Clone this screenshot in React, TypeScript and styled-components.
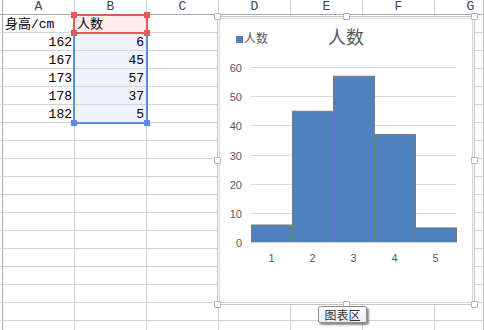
import styled, { createGlobalStyle } from "styled-components";

const GlobalStyle = createGlobalStyle`
  html, body {
    margin: 0;
    padding: 0;
    background: #ffffff;
  }
  body {
    font-family: "Liberation Mono", "Noto Sans CJK SC", monospace;
  }
`;

const columns = ["A", "B", "C", "D", "E", "F", "G"];
const heights = [
  { h: 162, n: 6 },
  { h: 167, n: 45 },
  { h: 173, n: 57 },
  { h: 178, n: 37 },
  { h: 182, n: 5 },
];
const ROWS = 18;

// chart geometry (svg coords)
const PLOT_LEFT = 33;
const PLOT_RIGHT = 238;
const BASE_Y = 186;
const UNIT = 175 / 60;
const BAR_W = (PLOT_RIGHT - PLOT_LEFT) / 5;

function App() {
  const cells: JSX.Element[] = [];
  cells.push(<Corner key="corner" />);
  columns.forEach((c) => cells.push(<ColHead key={"h" + c}>{c}</ColHead>));
  for (let r = 0; r < ROWS; r++) {
    cells.push(<Stub key={"s" + r} />);
    columns.forEach((c, ci) => {
      let text: string | number = "";
      let align: "left" | "right" = "right";
      let fill: "none" | "red" | "blue" = "none";
      if (r === 0 && ci === 0) {
        text = "身高/cm";
        align = "left";
      }
      if (r === 0 && ci === 1) {
        text = "人数";
        align = "left";
        fill = "red";
      }
      if (r >= 1 && r <= 5) {
        if (ci === 0) text = heights[r - 1].h;
        if (ci === 1) {
          text = heights[r - 1].n;
          fill = "blue";
        }
      }
      cells.push(
        <Cell key={r + c} $align={align} $fill={fill}>
          {text}
        </Cell>
      );
    });
  }

  return (
    <>
      <GlobalStyle />
      <Sheet>
        <Grid>{cells}</Grid>

        <BlueSel>
          <Corners>
            <CornerRow />
            <CornerRow>
              <Handle $c="#5b8de6" />
              <Handle $c="#5b8de6" />
            </CornerRow>
          </Corners>
        </BlueSel>
        <RedSel>
          <Corners>
            <CornerRow>
              <Handle $c="#e05c5c" />
              <Handle $c="#e05c5c" />
            </CornerRow>
            <CornerRow>
              <Handle $c="#e05c5c" />
              <Handle $c="#e05c5c" />
            </CornerRow>
          </Corners>
        </RedSel>

        <Chart>
          <FrameHandles>
            <FrameHandle />
            <FrameHandle />
            <FrameHandle />
            <FrameHandle />
            <span />
            <FrameHandle />
            <FrameHandle />
            <FrameHandle />
            <FrameHandle />
          </FrameHandles>
          <ChartHeader>
            <Legend>
              <Swatch />
              人数
            </Legend>
            <Title>人数</Title>
            <span />
          </ChartHeader>
          <svg width="256" height="230" viewBox="0 0 256 230">
            {[0, 10, 20, 30, 40, 50, 60].map((v) => {
              const y = Math.round(BASE_Y - v * UNIT) + 0.5;
              return (
                <g key={v}>
                  {v > 0 && (
                    <line x1={PLOT_LEFT} x2={PLOT_RIGHT} y1={y} y2={y} stroke="#d9d9d9" strokeWidth="1" />
                  )}
                  <text
                    x="24"
                    y={y + 4}
                    textAnchor="end"
                    fontSize="11"
                    fill="#595959"
                    fontFamily="'Liberation Sans', sans-serif"
                  >
                    {v}
                  </text>
                </g>
              );
            })}
            {heights.map((d, i) => {
              const x = PLOT_LEFT + i * BAR_W;
              const hgt = d.n * UNIT;
              return (
                <rect
                  key={i}
                  x={x + 0.5}
                  y={BASE_Y - hgt + 0.5}
                  width={BAR_W}
                  height={hgt}
                  fill="#4f81bd"
                  stroke="#7a7a7a"
                  strokeWidth="1"
                />
              );
            })}
            <line x1={PLOT_LEFT} x2={PLOT_RIGHT + 1} y1={BASE_Y + 0.5} y2={BASE_Y + 0.5} stroke="#d0d0d0" />
            {heights.map((_, i) => (
              <text
                key={"x" + i}
                x={PLOT_LEFT + i * BAR_W + BAR_W / 2}
                y={206}
                textAnchor="middle"
                fontSize="11"
                fill="#595959"
                fontFamily="'Liberation Sans', sans-serif"
              >
                {i + 1}
              </text>
            ))}
          </svg>
        </Chart>

        <Tip>图表区</Tip>
      </Sheet>
    </>
  );
}

const Sheet = styled.div`
  position: relative;
  width: 483px;
  height: 330px;
  overflow: hidden;
  border-right: 1px solid #c6c6c6;
`;

const Grid = styled.div`
  display: grid;
  grid-template-columns: 3px repeat(7, 72px);
  grid-template-rows: 15px repeat(${ROWS}, 18px);
  font-size: 13px;
  color: #000;
`;

const Corner = styled.div`
  border-right: 1px solid #a9a9a9;
  border-bottom: 1px solid #a9a9a9;
`;

const ColHead = styled.div`
  box-sizing: border-box;
  border-right: 1px solid #d4d4d4;
  border-bottom: 1px solid #a9a9a9;
  text-align: center;
  line-height: 14px;
  font-size: 13px;
  color: #444;
`;

const Stub = styled.div`
  box-sizing: border-box;
  border-right: 1px solid #a9a9a9;
  border-bottom: 1px solid #d4d4d4;
`;

const fills = {
  none: "transparent",
  red: "#fdeded",
  blue: "#edf2fc",
};

const Cell = styled.div<{ $align: "left" | "right"; $fill: "none" | "red" | "blue" }>`
  box-sizing: border-box;
  border-right: 1px solid #d4d4d4;
  border-bottom: 1px solid #d4d4d4;
  background: ${(p) => fills[p.$fill]};
  text-align: ${(p) => p.$align};
  padding: ${(p) => (p.$align === "left" ? "0 0 0 2px" : "0 2px 0 0")};
  line-height: 19px;
  white-space: nowrap;
  overflow: hidden;
`;

const Selection = styled.div`
  position: absolute;
  box-sizing: border-box;
  border: 2px solid;
`;

const RedSel = styled(Selection)`
  left: 73px;
  top: 14px;
  width: 75px;
  height: 20px;
  border-color: #e05c5c;
`;

const BlueSel = styled(Selection)`
  left: 73px;
  top: 32px;
  width: 75px;
  height: 92px;
  border-color: #5b8de6;
`;

const Corners = styled.div`
  position: absolute;
  inset: -4px;
  display: flex;
  flex-direction: column;
  justify-content: space-between;
`;

const CornerRow = styled.div`
  display: flex;
  justify-content: space-between;
  height: 6px;
`;

const Handle = styled.span<{ $c: string }>`
  width: 6px;
  height: 6px;
  background: ${(p) => p.$c};
`;

const Chart = styled.div`
  position: absolute;
  left: 217px;
  top: 16px;
  width: 258px;
  height: 289px;
  box-sizing: border-box;
  background: #fff;
  border: 1px solid #c4c4c4;
  box-shadow: inset 0 0 0 1px #fff, inset 0 0 0 2px #d4d4d4;
  font-family: "Liberation Sans", "Noto Sans CJK SC", sans-serif;
`;

const FrameHandles = styled.div`
  position: absolute;
  inset: -4px;
  display: grid;
  grid-template-columns: 7px 1fr 7px;
  grid-template-rows: 7px 1fr 7px;
  justify-items: center;
  align-items: center;
  pointer-events: none;
`;

const FrameHandle = styled.span`
  width: 5px;
  height: 5px;
  background: #fff;
  border: 1px solid #b5b5b5;
  border-radius: 1px;
`;

const ChartHeader = styled.div`
  box-sizing: border-box;
  height: 39px;
  padding-top: 9px;
  display: grid;
  grid-template-columns: 1fr auto 1fr;
  align-items: start;
`;

const Legend = styled.div`
  display: flex;
  align-items: center;
  gap: 1px;
  padding-left: 18px;
  padding-top: 6px;
  font-size: 12px;
  line-height: 14px;
  color: #595959;
`;

const Swatch = styled.span`
  width: 7px;
  height: 7px;
  background: #4f81bd;
`;

const Title = styled.div`
  font-size: 18px;
  line-height: 24px;
  color: #595959;
`;

const Tip = styled.div`
  position: absolute;
  left: 318px;
  top: 306px;
  width: 49px;
  height: 17px;
  box-sizing: border-box;
  border: 1px solid #8c8c8c;
  border-radius: 2px;
  background: linear-gradient(#ffffff, #eeeef2);
  box-shadow: 2px 2px 2px rgba(0, 0, 0, 0.45);
  font-family: "Noto Sans CJK SC", sans-serif;
  font-size: 12px;
  line-height: 15px;
  text-align: center;
  color: #333;
`;

export default App;
